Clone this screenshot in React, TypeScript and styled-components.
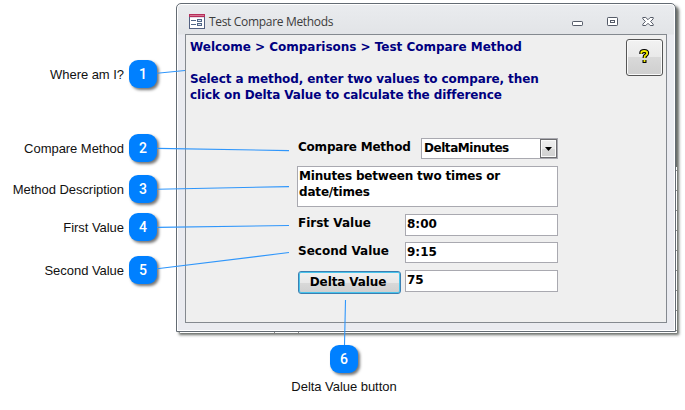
import React from 'react';
import styled, { createGlobalStyle } from 'styled-components';

const GlobalStyle = createGlobalStyle`
  * { box-sizing: border-box; }
  body { margin: 0; background: #fff; overflow: hidden; }
`;

const Page = styled.main`
  position: relative;
  width: 685px;
  height: 410px;
  overflow: hidden;
  display: grid;
  grid-template: 342px 68px / 176px 509px;
  background: #fff;
  color: #000;
`;

const Callouts = styled.aside`
  display: flex;
  flex-direction: column;
  padding-top: 60px;
`;

const Callout = styled.div<{ $gap: number }>`
  display: flex;
  align-items: center;
  justify-content: flex-end;
  height: 28px;
  margin: 0 19px ${p => p.$gap}px 0;
  gap: 5px;
`;

const CalloutLabel = styled.span`
  padding-top: 2px;
  font: 13px/18px "Liberation Sans", Arial, sans-serif;
  letter-spacing: -0.04px;
  white-space: nowrap;
  color: #111;
`;

const Badge = styled.span`
  display: flex;
  align-items: center;
  justify-content: center;
  flex: none;
  width: 28px;
  height: 28px;
  border-radius: 9px;
  background: #0080ff;
  box-shadow: 2px 2px 3px rgba(0, 0, 0, 0.55);
  color: #fff;
  font: 500 14px/28px Roboto, "Open Sans", sans-serif;
`;

const Window = styled.section`
  position: relative;
  width: 500px;
  height: 329px;
  margin-top: 3px;
  padding: 0 8px 8px;
  border: 1px solid #636b73;
  border-radius: 5px 5px 0 0;
  background: linear-gradient(#eaecef, #e2e4e7 30px, #eaebf0 31px);
  box-shadow: inset 0 0 0 1px #fff, 3px 3px 3px 0 rgba(45, 50, 45, 0.72);
`;

/* ruled sheet that shows through behind the window's lower right corner */
const SheetEdge = styled.i`
  position: absolute;
  left: 499px;
  top: 163px;
  width: 1px;
  height: 166px;
  background: repeating-linear-gradient(#fff 0 3px, #8c8c8c 3px 4px, #fff 4px 20px);
`;

const SheetBottom = styled.i`
  position: absolute;
  left: 3px;
  top: 328px;
  width: 497px;
  height: 1px;
  background: linear-gradient(90deg, #fff 94px, #888 94px 95px, #fff 95px 118px, #888 118px 119px, #fff 119px);
`;

const TitleBar = styled.header`
  display: flex;
  align-items: center;
  height: 30px;
  padding: 5px 13px 0 4px;
`;

const Title = styled.h1`
  flex: 1;
  margin: 0 0 0 4px;
  padding-top: 1px;
  color: #3c3c3c;
  font: 400 12px/18px "Open Sans", "Noto Sans", sans-serif;
  letter-spacing: -0.32px;
`;

const WindowControls = styled.div`
  display: flex;
  gap: 24px;
`;

const Form = styled.div`
  display: flex;
  flex-direction: column;
  height: 289px;
  border: 1px solid #84898f;
  background: #efefef;
  font: bold 12px/16px "DejaVu Sans", Verdana, sans-serif;
`;

const Intro = styled.div`
  display: flex;
  justify-content: space-between;
  height: 103px;
  padding: 4px 3px 0 4px;
  color: #000080;
`;

const Line = styled.p<{ $tracking?: number; $space?: number }>`
  margin: 0 0 ${p => p.$space ?? 0}px;
  letter-spacing: ${p => p.$tracking ?? 0}px;
  white-space: pre;
`;

const HelpButton = styled.button`
  display: flex;
  align-items: center;
  justify-content: center;
  width: 37px;
  height: 37px;
  padding: 0 0 2px;
  border: 1px solid #555;
  border-radius: 3px;
  background: linear-gradient(#f2f2f2, #e9e9e9 48%, #d9d9d9 49%, #cfcfcf);
  box-shadow: inset 0 0 0 1px #fafafa;
`;

const Fields = styled.div`
  display: flex;
  flex-direction: column;
  width: 261px;
  margin-left: 111px;
`;

const Row = styled.div<{ $gap: number; $height: number }>`
  display: flex;
  justify-content: space-between;
  height: ${p => p.$height}px;
  margin-bottom: ${p => p.$gap}px;
`;

const Label = styled.label<{ $tracking?: number }>`
  padding: 1px 0 0 1px;
  letter-spacing: ${p => p.$tracking ?? 0}px;
  white-space: nowrap;
`;

const Field = styled.div<{ $width: number; $tracking?: number }>`
  width: ${p => p.$width}px;
  height: 100%;
  padding: 1px 0 0 1px;
  border: 1px solid #a9a9b0;
  background: #fff;
  letter-spacing: ${p => p.$tracking ?? 0}px;
  white-space: pre-line;
`;

const Combo = styled(Field)`
  display: flex;
  justify-content: space-between;
  padding: 0;
`;

const ComboText = styled.span`
  padding: 1px 0 0 2px;
`;

const DropButton = styled.button`
  display: flex;
  align-items: center;
  justify-content: center;
  width: 17px;
  height: 19px;
  padding: 0;
  border: 1px solid #6d6d70;
  background: linear-gradient(#efefef, #e8e8e8 50%, #d8d8d8 51%, #d2d2d2);
  box-shadow: inset 0 0 0 1px #fafafa;
`;

const DeltaButton = styled.button`
  width: 103px;
  height: 23px;
  margin: 1px 0 0 1px;
  padding: 0 3px 2px 0;
  border: 1px solid #3c7fb1;
  border-radius: 3px;
  background: linear-gradient(#f0f0f0, #e8e8e8 50%, #d9d9d9 51%, #cfcfcf);
  box-shadow: inset 0 0 0 1px #48c4ec;
  color: #000;
  font: inherit;
  letter-spacing: -0.12px;
`;

const BottomCallout = styled.div`
  grid-column: 1 / -1;
  display: flex;
  flex-direction: column;
  align-items: center;
  gap: 3px;
  width: 160px;
  margin: 3px 0 0 264px;
`;

const Leaders = styled.svg`
  position: absolute;
  inset: 0;
  pointer-events: none;
`;

const callouts = [
  { n: 1, text: 'Where am I?', gap: 46 },
  { n: 2, text: 'Compare Method', gap: 13 },
  { n: 3, text: 'Method Description', gap: 10 },
  { n: 4, text: 'First Value', gap: 15 },
  { n: 5, text: 'Second Value', gap: 0 },
];

const FormIcon = () => (
  <svg width="16" height="16" viewBox="0 0 16 16" shapeRendering="crispEdges">
    <rect x=".5" y=".5" width="15" height="14" fill="#fff" stroke="#536181" />
    <path d="M0 0h16v3H0z" fill="#b52f5b" />
    <path d="M1 1h14v1H1z" fill="#d87591" />
    <path d="M1 3h14v1H1z" fill="#e7dce7" />
    <path d="M2 6.5h5M2 10.5h5" stroke="#526788" />
    <path d="M8.5 5.5h4v2h-4zM8.5 9.5h4v2h-4z" fill="#dce5ef" stroke="#526788" />
  </svg>
);

const MinimizeIcon = () => (
  <svg width="11" height="11" viewBox="0 0 11 11">
    <rect x=".5" y="5.5" width="10" height="4" rx=".7" fill="#fff" stroke="#555b68" />
  </svg>
);

const MaximizeIcon = () => (
  <svg width="11" height="11" viewBox="0 0 11 11">
    <rect x=".5" y="1.5" width="10" height="8" rx=".7" fill="#fff" stroke="#555b68" />
    <rect x="3.5" y="4.5" width="4" height="2" fill="#fff" stroke="#555b68" />
  </svg>
);

const CloseIcon = () => (
  <svg width="12" height="11" viewBox="0 0 12 11">
    <path
      d="M.8 1.5h3L6 3.7l2.2-2.2h3v1.3L8.6 5.5l2.6 2.7v1.3h-3L6 7.3 3.8 9.5h-3V8.2l2.6-2.7L.8 2.8z"
      fill="#fff"
      stroke="#555b68"
    />
  </svg>
);

const QuestionIcon = () => (
  <svg width="11" height="15" viewBox="0 0 11 15">
    <path
      d="M2.3 5V3.8Q2.3 2 5.2 2T8.2 4Q8.2 5.3 6.8 6.2T5.6 8.2V9M5.5 11V14"
      fill="none"
      stroke="#000"
      strokeWidth="4"
    />
    <path
      d="M2.3 4.7V3.8Q2.3 2 5.2 2T8.2 4Q8.2 5.3 6.8 6.2T5.6 8.2V9M5.5 11V13"
      fill="none"
      stroke="#f3ec00"
      strokeWidth="1.8"
    />
  </svg>
);

export default function App() {
  return (
    <>
      <GlobalStyle />
      <Page>
        <Callouts>
          {callouts.map(c => (
            <Callout key={c.n} $gap={c.gap}>
              <CalloutLabel>{c.text}</CalloutLabel>
              <Badge>{c.n}</Badge>
            </Callout>
          ))}
        </Callouts>
        <Window>
          <SheetEdge />
          <SheetBottom />
          <TitleBar>
            <FormIcon />
            <Title>Test Compare Methods</Title>
            <WindowControls>
              <MinimizeIcon />
              <MaximizeIcon />
              <CloseIcon />
            </WindowControls>
          </TitleBar>
          <Form>
            <Intro>
              <div>
                <Line $space={16} $tracking={-0.02}>Welcome &gt; Comparisons &gt; Test Compare Method</Line>
                <Line $tracking={-0.09}>Select a method, enter two values to compare, then</Line>
                <Line $tracking={-0.1}>click on Delta Value to calculate the difference</Line>
              </div>
              <HelpButton aria-label="Help">
                <QuestionIcon />
              </HelpButton>
            </Intro>
            <Fields>
              <Row $height={21} $gap={7}>
                <Label $tracking={-0.22}>Compare Method</Label>
                <Combo $width={137} $tracking={-0.45}>
                  <ComboText>DeltaMinutes</ComboText>
                  <DropButton aria-label="Open list">
                    <svg width="7" height="4" viewBox="0 0 7 4">
                      <path d="M0 0h7L3.5 4z" fill="#000" />
                    </svg>
                  </DropButton>
                </Combo>
              </Row>
              <Row $height={41} $gap={7}>
                <Field $width={261} $tracking={-0.18}>{'Minutes between two times or\ndate/times'}</Field>
              </Row>
              <Row $height={22} $gap={6}>
                <Label>First Value</Label>
                <Field $width={153}>8:00</Field>
              </Row>
              <Row $height={21} $gap={7}>
                <Label>Second Value</Label>
                <Field $width={153}>9:15</Field>
              </Row>
              <Row $height={22} $gap={0}>
                <DeltaButton>Delta Value</DeltaButton>
                <Field $width={153}>75</Field>
              </Row>
            </Fields>
          </Form>
        </Window>
        <BottomCallout>
          <Badge>6</Badge>
          <CalloutLabel>Delta Value button</CalloutLabel>
        </BottomCallout>
        <Leaders width="685" height="410" fill="none" stroke="#2f96fb" strokeWidth="1.1">
          <path d="M157 73.3 185 70.5M157 148.4 289 150.6M157 189.2 289 186.6M157 227.4 289 225.5M157 268.8 289 252.5M344.5 345 345.5 300" />
        </Leaders>
      </Page>
    </>
  );
}
